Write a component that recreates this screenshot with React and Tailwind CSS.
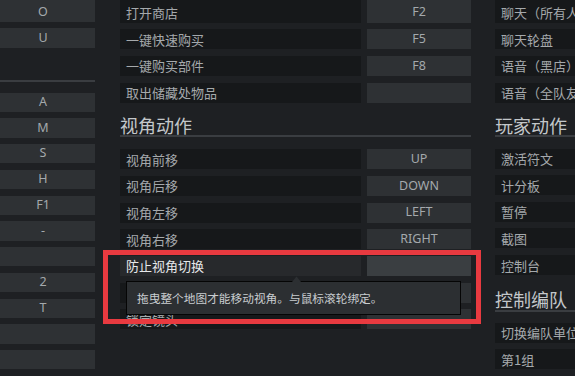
import React from "react";

const cjk = { fontFamily: '"Noto Sans CJK SC", "Noto Sans", sans-serif' };
const latin = { fontFamily: '"Noto Sans", "Liberation Sans", sans-serif' };

function KeyBox({ k, first, hl }) {
  return (
    <div
      className={`${first ? "h-[22.67px] pt-[2.67px]" : "h-[20px]"} mb-[6.67px] w-full flex items-center justify-center text-[12.5px] leading-none ${hl ? "bg-[#3a3e41]" : "bg-[#2e3134]"} text-[#a4a9ac]`}
      style={latin}
    >
      {k}
    </div>
  );
}

function Label({ t, first, hl }) {
  return (
    <div
      className={`${first ? "h-[22.67px] pt-[2.67px]" : "h-[20px]"} w-full flex items-center pl-[6px] text-[13px] leading-none whitespace-nowrap overflow-hidden ${hl ? "bg-[#27292c] text-[#e6e8ea]" : "bg-[#16181a] text-[#a5a9ac]"}`}
      style={cjk}
    >
      {t}
    </div>
  );
}

function Row({ t, k, first, hl }) {
  return (
    <div className="flex gap-[6px] mb-[6.67px]">
      <div className="w-[241px] shrink-0">
        <Label t={t} first={first} hl={hl} />
      </div>
      <div className="w-[104px] shrink-0">
        <div
          className={`${first ? "h-[22.67px] pt-[2.67px]" : "h-[20px]"} w-full flex items-center justify-center text-[12.5px] leading-none ${hl ? "bg-[#3a3e41]" : "bg-[#2e3134]"} text-[#a4a9ac]`}
          style={latin}
        >
          {k}
        </div>
      </div>
    </div>
  );
}

function Header({ t, extra = "" }) {
  return (
    <div className={`h-[40px] flex flex-col pt-[6.67px] ${extra}`}>
      <div
        className="h-[18px] leading-[18px] text-[18px] text-[#c3c7ca] whitespace-nowrap"
        style={cjk}
      >
        {t}
      </div>
      <div className="mt-[1.5px] h-[2px] w-full bg-[#3a3d41]" />
    </div>
  );
}

function RightLabel({ t, first }) {
  return (
    <div className="mb-[6.67px]">
      <Label t={t} first={first} />
    </div>
  );
}

export default function App() {
  return (
    <div className="relative w-[575px] h-[376px] overflow-hidden bg-[#1e2023] flex">
      {/* Column 1: keys (partly off the left edge) */}
      <div className="ml-[-9px] w-[104px] shrink-0 flex flex-col">
        <KeyBox k="O" first />
        <KeyBox k="U" />
        <Header t="" />
        <KeyBox k="A" />
        <KeyBox k="M" />
        <KeyBox k="S" />
        <KeyBox k="H" />
        <KeyBox k="F1" />
        <KeyBox k="-" />
        <KeyBox k="" />
        <KeyBox k="2" />
        <KeyBox k="T" />
        <KeyBox k="" />
        <KeyBox k="" />
      </div>

      {/* Column 2 */}
      <div className="ml-[25px] w-[351px] shrink-0 flex flex-col">
        <Row t="打开商店" k="F2" first />
        <Row t="一键快速购买" k="F5" />
        <Row t="一键购买部件" k="F8" />
        <Row t="取出储藏处物品" k="" />
        <Header t="视角动作" />
        <Row t="视角前移" k="UP" />
        <Row t="视角后移" k="DOWN" />
        <Row t="视角左移" k="LEFT" />
        <Row t="视角右移" k="RIGHT" />
        <Row t="防止视角切换" k="" hl />
        <Row t="" k="" />
        <Row t="锁定镜头" k="" />
      </div>

      {/* Column 3 */}
      <div className="ml-[24px] w-[241px] shrink-0 flex flex-col">
        <RightLabel t="聊天（所有人）" first />
        <RightLabel t="聊天轮盘" />
        <RightLabel t="语音（黑店）" />
        <RightLabel t="语音（全队友方）" />
        <Header t="玩家动作" />
        <RightLabel t="激活符文" />
        <RightLabel t="计分板" />
        <RightLabel t="暂停" />
        <RightLabel t="截图" />
        <RightLabel t="控制台" />
        <Header t="控制编队" extra="mt-[1.67px]" />
        <RightLabel t="切换编队单位" />
        <RightLabel t="第1组" />
      </div>

      {/* Tooltip */}
      <div className="absolute left-[126px] top-[281px] w-[335px] h-[33.5px] bg-[#2c2f32] border border-[#050505] flex items-center pl-[10px]">
        <span className="text-[11.7px] leading-none text-[#c9cdd0] whitespace-nowrap" style={cjk}>
          拖曳整个地图才能移动视角。与鼠标滚轮绑定。
        </span>
      </div>
      <svg className="absolute left-[292px] top-[275.5px]" width="9" height="6" viewBox="0 0 9 6">
        <path d="M0 6 L4.5 0.5 L9 6 Z" fill="#2c2f32" />
      </svg>

      {/* Red highlight annotation */}
      <div className="absolute left-[103px] top-[250px] w-[378px] h-[73.5px] border-[5px] border-[#e83a40]" />
    </div>
  );
}
